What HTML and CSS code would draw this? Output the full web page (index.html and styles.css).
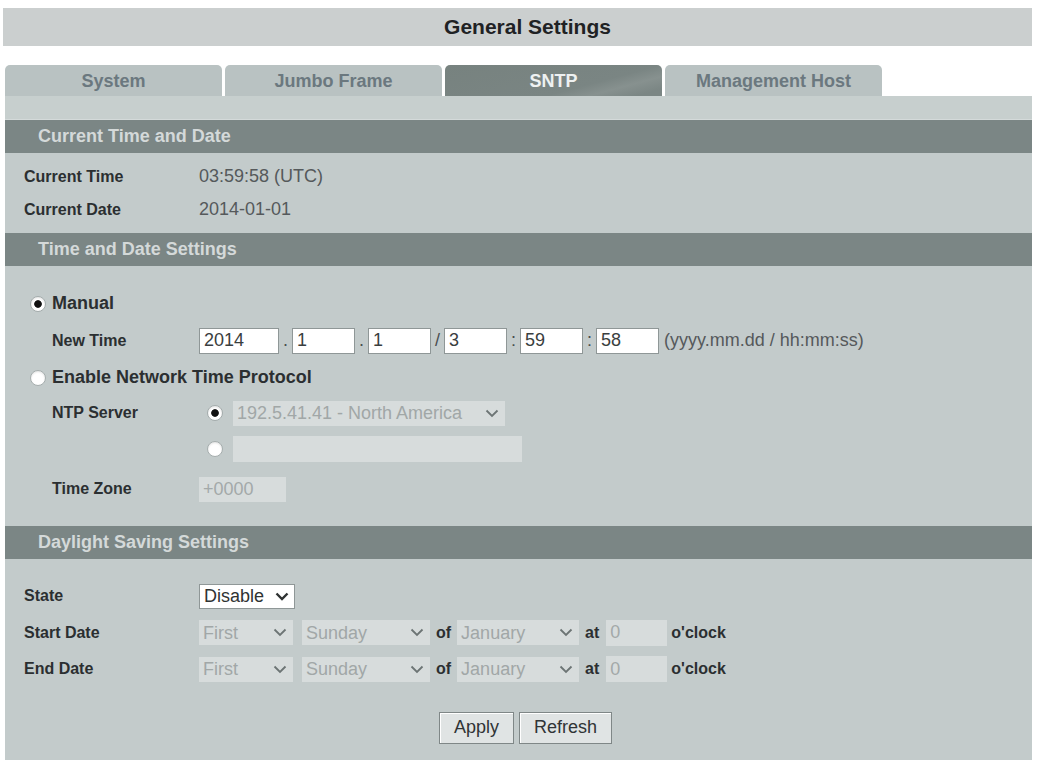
FILE: index.html
```html
<!DOCTYPE html>
<html lang="en">
<head>
  <meta charset="UTF-8" />
  <title>General Settings - SNTP</title>
  <link rel="stylesheet" href="styles.css">
</head>
<body>

<div class="page">
  <div class="title-bar">General Settings</div>

  <!-- abas -->
  <ul class="tabs">
    <li class="tab">System</li>
    <li class="tab">Jumbo Frame</li>
    <li class="tab active">SNTP</li>
    <li class="tab">Management Host</li>
  </ul>

  <div class="panel">
    <div class="tab-band"></div>

    <!-- Current Time and Date -->
    <h2 class="section-head">Current Time and Date</h2>
    <div class="section-body info">
      <div class="row">
        <span class="label">Current Time</span>
        <span class="value">03:59:58 (UTC)</span>
      </div>
      <div class="row">
        <span class="label">Current Date</span>
        <span class="value">2014-01-01</span>
      </div>
    </div>

    <!-- Time and Date Settings -->
    <h2 class="section-head">Time and Date Settings</h2>
    <div class="section-body settings">
      <label class="row radio-row">
        <input type="radio" name="mode" checked>
        <span class="radio-label">Manual</span>
      </label>
      <div class="row sub">
        <span class="label">New Time</span>
        <input class="box year" type="text" value="2014">
        <span class="sep">.</span>
        <input class="box" type="text" value="1">
        <span class="sep">.</span>
        <input class="box" type="text" value="1">
        <span class="sep">/</span>
        <input class="box" type="text" value="3">
        <span class="sep">:</span>
        <input class="box" type="text" value="59">
        <span class="sep">:</span>
        <input class="box" type="text" value="58">
        <span class="hint">(yyyy.mm.dd / hh:mm:ss)</span>
      </div>
      <label class="row radio-row">
        <input type="radio" name="mode">
        <span class="radio-label">Enable Network Time Protocol</span>
      </label>
      <div class="row sub short">
        <span class="label">NTP Server</span>
        <input class="inner-radio" type="radio" name="ntp" checked disabled>
        <span class="select off ntp-select">
          <select disabled><option>192.5.41.41 - North America</option></select>
          <svg class="chev" width="14" height="9" viewBox="0 0 14 9"><polyline points="1.5,1.5 7,7 12.5,1.5" fill="none" stroke="#6c7474" stroke-width="1.8"/></svg>
        </span>
      </div>
      <div class="row sub">
        <span class="label"></span>
        <input class="inner-radio" type="radio" name="ntp" disabled>
        <input class="box off ntp-text" type="text" disabled>
      </div>
      <div class="row sub tall">
        <span class="label">Time Zone</span>
        <input class="box off zone" type="text" value="+0000" disabled>
      </div>
    </div>

    <!-- Daylight Saving Settings -->
    <h2 class="section-head">Daylight Saving Settings</h2>
    <div class="section-body dst">
      <div class="row">
        <span class="label">State</span>
        <span class="select state">
          <select><option>Disable</option><option>Enable</option></select>
          <svg class="chev" width="14" height="9" viewBox="0 0 14 9"><polyline points="1.5,1.5 7,7 12.5,1.5" fill="none" stroke="#2f3333" stroke-width="2.4"/></svg>
        </span>
      </div>
      <div class="row">
        <span class="label">Start Date</span>
        <span class="select off week">
          <select disabled><option>First</option></select>
          <svg class="chev" width="14" height="9" viewBox="0 0 14 9"><polyline points="1.5,1.5 7,7 12.5,1.5" fill="none" stroke="#6c7474" stroke-width="1.8"/></svg>
        </span>
        <span class="select off day">
          <select disabled><option>Sunday</option></select>
          <svg class="chev" width="14" height="9" viewBox="0 0 14 9"><polyline points="1.5,1.5 7,7 12.5,1.5" fill="none" stroke="#6c7474" stroke-width="1.8"/></svg>
        </span>
        <span class="word">of</span>
        <span class="select off month">
          <select disabled><option>January</option></select>
          <svg class="chev" width="14" height="9" viewBox="0 0 14 9"><polyline points="1.5,1.5 7,7 12.5,1.5" fill="none" stroke="#6c7474" stroke-width="1.8"/></svg>
        </span>
        <span class="word">at</span>
        <input class="box off hour" type="text" value="0" disabled>
        <span class="word clock">o'clock</span>
      </div>
      <div class="row">
        <span class="label">End Date</span>
        <span class="select off week">
          <select disabled><option>First</option></select>
          <svg class="chev" width="14" height="9" viewBox="0 0 14 9"><polyline points="1.5,1.5 7,7 12.5,1.5" fill="none" stroke="#6c7474" stroke-width="1.8"/></svg>
        </span>
        <span class="select off day">
          <select disabled><option>Sunday</option></select>
          <svg class="chev" width="14" height="9" viewBox="0 0 14 9"><polyline points="1.5,1.5 7,7 12.5,1.5" fill="none" stroke="#6c7474" stroke-width="1.8"/></svg>
        </span>
        <span class="word">of</span>
        <span class="select off month">
          <select disabled><option>January</option></select>
          <svg class="chev" width="14" height="9" viewBox="0 0 14 9"><polyline points="1.5,1.5 7,7 12.5,1.5" fill="none" stroke="#6c7474" stroke-width="1.8"/></svg>
        </span>
        <span class="word">at</span>
        <input class="box off hour" type="text" value="0" disabled>
        <span class="word clock">o'clock</span>
      </div>

      <div class="buttons">
        <button type="button" class="btn">Apply</button>
        <button type="button" class="btn">Refresh</button>
      </div>
    </div>
  </div>
</div>

</body>
</html>
```

FILE: styles.css
```css
body {
  margin: 0;
  background: #fff;
  font-family: "Liberation Sans", Arial, sans-serif;
  color: #2b2f31;
}

.page {
  width: 1029px;
  margin-left: 3px;
  padding-top: 8px;
}

/* barra de titulo */
.title-bar {
  height: 38px;
  line-height: 38px;
  padding-left: 20px;
  background: #cbcfcf;
  text-align: center;
  font-size: 21px;
  font-weight: bold;
  color: #1f2224;
}

/* abas */
.tabs {
  list-style: none;
  margin: 19px 0 0;
  padding: 0 0 0 2px;
  display: flex;
  gap: 3px;
}

.tab {
  width: 217px;
  height: 31px;
  line-height: 32px;
  text-align: center;
  border-radius: 5px 5px 0 0;
  background: #b9c2c2;
  color: #6b787f;
  font-size: 18px;
  font-weight: bold;
}

.tab.active {
  background: linear-gradient(165deg, #77827f 0%, #7a8583 65%, #87918f 78%, #7b8684 92%);
  color: #eef1f1;
}

.panel {
  margin-left: 2px;
  width: 1027px;
  background: #c3cbcb;
  padding-bottom: 40px;
}

.tab-band {
  height: 23px;
  background: #c7cfce;
  border-bottom: 1px solid #d4dada;
}

.section-head {
  margin: 0;
  height: 33px;
  line-height: 33px;
  padding-left: 33px;
  background: #7b8685;
  color: #d4d9d9;
  font-size: 18px;
  font-weight: bold;
}

.section-body {
  padding-left: 19px;
}

.section-body.info {
  padding-top: 7px;
  padding-bottom: 7px;
}

.section-body.settings {
  padding-top: 19px;
  padding-bottom: 15px;
}

.section-body.dst {
  padding-top: 19px;
}

.row {
  display: flex;
  align-items: center;
  height: 33px;
}

.settings .row {
  height: 37px;
}

.settings .row.short {
  height: 34px;
}

.settings .row.tall {
  height: 44px;
}

.dst .row {
  height: 36.5px;
}

.label {
  width: 175px;
  flex: none;
  font-size: 16px;
  font-weight: bold;
  color: #2b2f31;
}

.value {
  font-size: 18px;
  color: #55595b;
}

/* radios */
input[type="radio"] {
  appearance: none;
  -webkit-appearance: none;
  margin: 0;
  width: 16px;
  height: 16px;
  border-radius: 50%;
  border: 1px solid #a5adad;
  background: #fff;
  flex: none;
  box-shadow: inset 0 1px 2px rgba(0, 0, 0, 0.12);
}

input[type="radio"]:checked {
  background: radial-gradient(circle, #111 0 3.4px, #fff 4.2px);
}

.radio-row {
  padding-left: 6px;
}

.radio-label {
  margin-left: 6px;
  font-size: 18px;
  font-weight: bold;
  color: #2b2f31;
}

.sub {
  padding-left: 28px;
}

.sub .label {
  width: 147px;
}

.inner-radio {
  margin-left: 8px !important;
  margin-right: 10px !important;
}

/* campos */
.box {
  box-sizing: border-box;
  width: 63px;
  height: 26px;
  padding: 0 4px;
  border: 1px solid #8f9797;
  background: #fff;
  font-family: "Liberation Sans", Arial, sans-serif;
  font-size: 18px;
  color: #3a3e40;
  flex: none;
}

.box.year {
  width: 80px;
}

.sep {
  width: 13px;
  text-align: center;
  font-size: 18px;
  color: #4a4e50;
}

.hint {
  margin-left: 5px;
  font-size: 18px;
  color: #55595b;
}

.box.off {
  border: none;
  background: #d7dcdc;
  color: #a3a9a9;
}

.ntp-text {
  width: 289px;
}

.zone {
  width: 87px;
  height: 25px;
}

/* selects */
.select {
  position: relative;
  display: inline-block;
  flex: none;
  height: 25px;
}

.select select {
  appearance: none;
  -webkit-appearance: none;
  width: 100%;
  height: 100%;
  margin: 0;
  padding: 0 4px;
  border: none;
  background: #d7dcdc;
  font-family: "Liberation Sans", Arial, sans-serif;
  font-size: 18px;
  color: #a1a7a7;
  opacity: 1;
}

.select .chev {
  position: absolute;
  right: 6px;
  top: 8px;
  pointer-events: none;
}

.ntp-select {
  width: 272px;
}

.select.state {
  width: 96px;
}

.select.state select {
  box-sizing: border-box;
  background: #fff;
  border: 1px solid #8f9797;
  color: #2f3333;
}

.select.week {
  width: 94px;
}

.select.day {
  width: 128px;
  margin-left: 9px;
}

.select.month {
  width: 122px;
}

.word {
  margin: 0 6px;
  font-size: 16px;
  font-weight: bold;
  color: #2b2f31;
}

.box.hour {
  width: 61px;
  margin-left: 1px;
}

.word.clock {
  margin-left: 4px;
}

/* botoes */
.buttons {
  display: flex;
  justify-content: center;
  gap: 5px;
  margin-top: 24px;
  padding-right: 5px;
}

.btn {
  height: 32px;
  padding: 0 14px;
  border: 1px solid #7f8787;
  background: #e0e4e4;
  box-shadow: inset 1px 1px 0 #fff;
  font-family: "Liberation Sans", Arial, sans-serif;
  font-size: 18px;
  color: #303436;
}
```
